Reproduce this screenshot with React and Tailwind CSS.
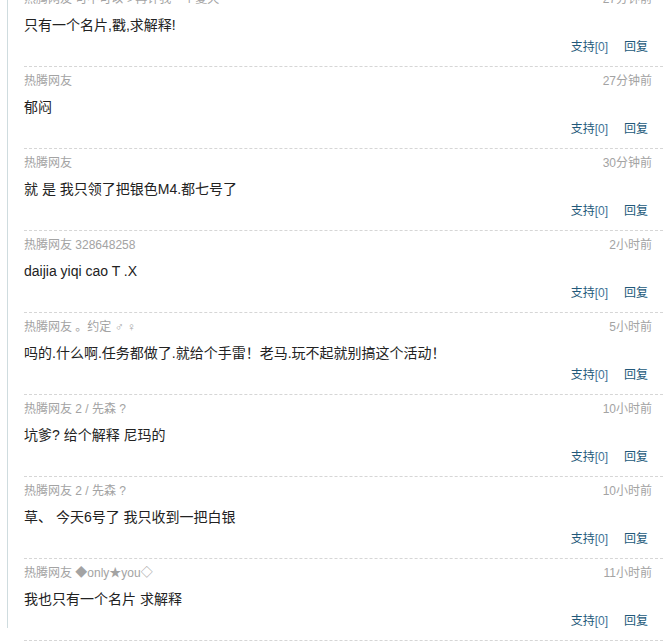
const comments = [
  { user: "热腾网友 可不可以ゞ再许我一个夏天", time: "27分钟前", text: "只有一个名片,戳,求解释!" },
  { user: "热腾网友", time: "27分钟前", text: "郁闷" },
  { user: "热腾网友", time: "30分钟前", text: "就 是 我只领了把银色M4.都七号了" },
  { user: "热腾网友 328648258", time: "2小时前", text: "daijia yiqi cao T .X" },
  { user: "热腾网友 。约定 ♂ ♀", time: "5小时前", text: "吗的.什么啊.任务都做了.就给个手雷！老马.玩不起就别搞这个活动！" },
  { user: "热腾网友 2 / 先森 ?", time: "10小时前", text: "坑爹? 给个解释 尼玛的" },
  { user: "热腾网友 2 / 先森 ?", time: "10小时前", text: "草、 今天6号了 我只收到一把白银" },
  { user: "热腾网友 ◆only★you◇", time: "11小时前", text: "我也只有一个名片 求解释" },
];

function CommentItem({ c }) {
  return (
    <div className="border-t border-dashed border-[#d6d6d6] pt-[5px] pb-[10px]">
      <div className="flex justify-between pr-[11px] text-[12px] leading-[18px] text-[#a3a3a3]">
        <span>{c.user}</span>
        <span>{c.time}</span>
      </div>
      <p className="mt-[7px] text-[14px] leading-[20px] text-[#222]">{c.text}</p>
      <div className="mt-[3px] flex justify-end gap-[16px] pr-[15px] text-[12px] leading-[18px] text-[#22597a]">
        <a className="cursor-pointer">支持<span className="text-[#3f7396]">[0]</span></a>
        <a className="cursor-pointer">回复</a>
      </div>
    </div>
  );
}

export default function App() {
  return (
    <div
      className="h-[644px] w-[672px] overflow-hidden bg-white"
      style={{ fontFamily: '"Liberation Sans", "Noto Sans CJK SC", sans-serif' }}
    >
      <div className="ml-[7px] h-full border-l border-[#cfdcdf] pl-[16px] pr-[9px]">
        <div className="-mt-[16px]">
          {comments.map((c, i) => (
            <CommentItem key={i} c={c} />
          ))}
          <div className="border-t border-dashed border-[#d6d6d6]" />
        </div>
      </div>
    </div>
  );
}
